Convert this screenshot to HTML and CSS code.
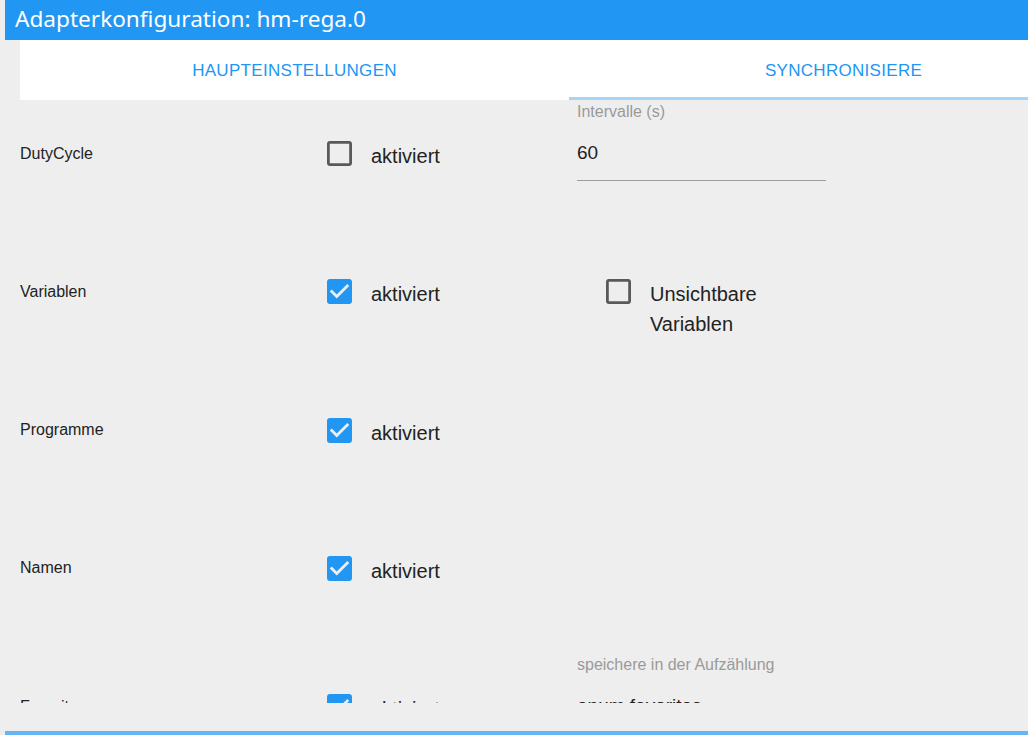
FILE: index.html
```html
<!DOCTYPE html>
<html lang="de">
<head>
<meta charset="utf-8">
<title>Adapterkonfiguration: hm-rega.0</title>
<link rel="stylesheet" href="styles.css">
</head>
<body>
<div class="app">
  <div class="titlebar">Adapterkonfiguration: hm-rega.0</div>
  <div class="main">
    <div class="tabs">
      <div class="tab">HAUPTEINSTELLUNGEN</div>
      <div class="tab active">SYNCHRONISIERE</div>
    </div>
    <div class="content">
      <div class="row">
        <div class="label">DutyCycle</div>
        <div class="check">
          <svg class="box" viewBox="3 3 18 18"><path class="off" d="M19 5v14H5V5h14m0-2H5c-1.1 0-2 .9-2 2v14c0 1.1.9 2 2 2h14c1.1 0 2-.9 2-2V5c0-1.1-.9-2-2-2z"/></svg>
          <span class="check-text">aktiviert</span>
        </div>
        <div class="field">
          <div class="field-label">Intervalle (s)</div>
          <div class="field-input">60</div>
        </div>
      </div>
      <div class="row">
        <div class="label">Variablen</div>
        <div class="check">
          <svg class="box" viewBox="3 3 18 18"><path class="on" d="M19 3H5c-1.11 0-2 .9-2 2v14c0 1.1.89 2 2 2h14c1.11 0 2-.9 2-2V5c0-1.1-.89-2-2-2zm-9 14l-5-5 1.41-1.41L10 14.17l7.59-7.59L19 8l-9 9z"/></svg>
          <span class="check-text">aktiviert</span>
        </div>
        <div class="check check-indent">
          <svg class="box" viewBox="3 3 18 18"><path class="off" d="M19 5v14H5V5h14m0-2H5c-1.1 0-2 .9-2 2v14c0 1.1.9 2 2 2h14c1.1 0 2-.9 2-2V5c0-1.1-.9-2-2-2z"/></svg>
          <span class="check-text">Unsichtbare Variablen</span>
        </div>
      </div>
      <div class="row">
        <div class="label">Programme</div>
        <div class="check">
          <svg class="box" viewBox="3 3 18 18"><path class="on" d="M19 3H5c-1.11 0-2 .9-2 2v14c0 1.1.89 2 2 2h14c1.11 0 2-.9 2-2V5c0-1.1-.89-2-2-2zm-9 14l-5-5 1.41-1.41L10 14.17l7.59-7.59L19 8l-9 9z"/></svg>
          <span class="check-text">aktiviert</span>
        </div>
      </div>
      <div class="row">
        <div class="label">Namen</div>
        <div class="check">
          <svg class="box" viewBox="3 3 18 18"><path class="on" d="M19 3H5c-1.11 0-2 .9-2 2v14c0 1.1.89 2 2 2h14c1.11 0 2-.9 2-2V5c0-1.1-.89-2-2-2zm-9 14l-5-5 1.41-1.41L10 14.17l7.59-7.59L19 8l-9 9z"/></svg>
          <span class="check-text">aktiviert</span>
        </div>
      </div>
      <div class="row">
        <div class="label">Favoriten</div>
        <div class="check">
          <svg class="box" viewBox="3 3 18 18"><path class="on" d="M19 3H5c-1.11 0-2 .9-2 2v14c0 1.1.89 2 2 2h14c1.11 0 2-.9 2-2V5c0-1.1-.89-2-2-2zm-9 14l-5-5 1.41-1.41L10 14.17l7.59-7.59L19 8l-9 9z"/></svg>
          <span class="check-text">aktiviert</span>
        </div>
        <div class="field">
          <div class="field-label">speichere in der Aufzählung</div>
          <div class="field-input">enum.favorites</div>
        </div>
      </div>
    </div>
  </div>
  <div class="bottombar"></div>
</div>
</body>
</html>
```
FILE: styles.css
```css
html, body {
  margin: 0;
  padding: 0;
  background: #eeeeee;
  overflow: hidden;
}
body {
  font-family: "Liberation Sans", Arial, sans-serif;
  color: #212121;
}
.app {
  display: flex;
  flex-direction: column;
  height: 735px;
  width: 1028px;
  padding-left: 5px;
  box-sizing: border-box;
  overflow: hidden;
}
.titlebar {
  flex: 0 0 40px;
  background: #2196f3;
  color: #ffffff;
  font-family: "Noto Sans", "Open Sans", sans-serif;
  font-size: 22.6px;
  line-height: 38px;
  padding-left: 10px;
  white-space: nowrap;
}
.main {
  flex: 1 1 auto;
  padding-left: 15px;
  overflow: hidden;
}
.tabs {
  display: flex;
  width: 1098px;
  height: 60px;
  background: #ffffff;
}
.tab {
  flex: 1 1 0;
  display: flex;
  align-items: center;
  justify-content: center;
  color: #2196f3;
  font-size: 17px;
  letter-spacing: 0.3px;
  padding-top: 1px;
  box-sizing: border-box;
}
.tab.active {
  box-shadow: inset 0 -3px 0 #a6d5fa;
}
.content {
  height: 603px;
  overflow: hidden;
}
.row {
  display: grid;
  grid-template-columns: 307px 250px 249px;
  height: 138.25px;
  align-items: start;
}
.label {
  font-size: 16px;
  line-height: 20px;
  padding-top: 43.5px;
  color: #222222;
}
.check {
  display: flex;
  align-items: flex-start;
  gap: 19px;
  padding-top: 41px;
}
.check-indent {
  padding-left: 29px;
}
.box {
  flex: 0 0 25px;
  width: 25px;
  height: 25px;
}
.box .off {
  fill: #595959;
}
.box .on {
  fill: #2196f3;
}
.check-text {
  font-size: 20px;
  line-height: 30px;
  margin-top: 0;
  color: #222222;
}
.field {
  padding-top: 1.5px;
}
.field-label {
  font-size: 16px;
  line-height: 20px;
  color: #9a9a9a;
}
.field-input {
  margin-top: 19.5px;
  font-size: 19px;
  line-height: 23px;
  padding-bottom: 16px;
  border-bottom: 1px solid #9e9e9e;
  color: #222222;
}
.bottombar {
  flex: 0 0 4px;
  background: #64b5f6;
}
```
